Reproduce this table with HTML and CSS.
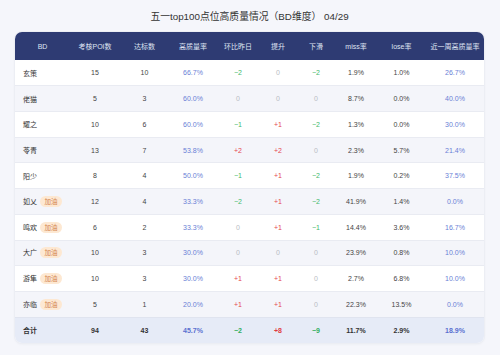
FILE: index.html
```html
<!DOCTYPE html>
<html lang="zh">
<head>
<meta charset="utf-8">
<link rel="stylesheet" href="styles.css">
</head>
<body>
<div class="page">
  <h1 class="title">五一top100点位高质量情况（BD维度） 04/29</h1>
  <div class="card">
    <table class="grid">
      <colgroup>
        <col style="width:55px"><col style="width:50px"><col style="width:49px"><col style="width:48px"><col style="width:42px"><col style="width:38px"><col style="width:38px"><col style="width:42px"><col style="width:49px"><col style="width:58px">
      </colgroup>
      <thead>
        <tr><th>BD</th><th>考核POI数</th><th>达标数</th><th>高质量率</th><th>环比昨日</th><th>提升</th><th>下滑</th><th>miss率</th><th>lose率</th><th>近一周高质量率</th></tr>
      </thead>
      <tbody>
        <tr><td class="name">玄策</td><td>15</td><td>10</td><td class="blue">66.7%</td><td class="green">−2</td><td class="zero">0</td><td class="green">−2</td><td>1.9%</td><td>1.0%</td><td class="blue">26.7%</td></tr>
        <tr><td class="name">佬猫</td><td>5</td><td>3</td><td class="blue">60.0%</td><td class="zero">0</td><td class="zero">0</td><td class="zero">0</td><td>8.7%</td><td>0.0%</td><td class="blue">40.0%</td></tr>
        <tr><td class="name">耀之</td><td>10</td><td>6</td><td class="blue">60.0%</td><td class="green">−1</td><td class="red">+1</td><td class="green">−2</td><td>1.3%</td><td>0.0%</td><td class="blue">30.0%</td></tr>
        <tr><td class="name">苓青</td><td>13</td><td>7</td><td class="blue">53.8%</td><td class="red">+2</td><td class="red">+2</td><td class="zero">0</td><td>2.3%</td><td>5.7%</td><td class="blue">21.4%</td></tr>
        <tr><td class="name">阳少</td><td>8</td><td>4</td><td class="blue">50.0%</td><td class="green">−1</td><td class="red">+1</td><td class="green">−2</td><td>1.9%</td><td>0.2%</td><td class="blue">37.5%</td></tr>
        <tr><td class="name">如乂<span class="tag">加油</span></td><td>12</td><td>4</td><td class="blue">33.3%</td><td class="green">−2</td><td class="red">+1</td><td class="green">−2</td><td>41.9%</td><td>1.4%</td><td class="blue">0.0%</td></tr>
        <tr><td class="name">鸣欢<span class="tag">加油</span></td><td>6</td><td>2</td><td class="blue">33.3%</td><td class="zero">0</td><td class="red">+1</td><td class="green">−1</td><td>14.4%</td><td>3.6%</td><td class="blue">16.7%</td></tr>
        <tr><td class="name">大广<span class="tag">加油</span></td><td>10</td><td>3</td><td class="blue">30.0%</td><td class="zero">0</td><td class="zero">0</td><td class="zero">0</td><td>23.9%</td><td>0.8%</td><td class="blue">10.0%</td></tr>
        <tr><td class="name">游隼<span class="tag">加油</span></td><td>10</td><td>3</td><td class="blue">30.0%</td><td class="red">+1</td><td class="red">+1</td><td class="zero">0</td><td>2.7%</td><td>6.8%</td><td class="blue">10.0%</td></tr>
        <tr><td class="name">亦临<span class="tag">加油</span></td><td>5</td><td>1</td><td class="blue">20.0%</td><td class="red">+1</td><td class="red">+1</td><td class="zero">0</td><td>22.3%</td><td>13.5%</td><td class="blue">0.0%</td></tr>
      </tbody>
      <tfoot>
        <tr><td class="name">合计</td><td>94</td><td>43</td><td class="blue">45.7%</td><td class="green">−2</td><td class="red">+8</td><td class="green">−9</td><td>11.7%</td><td>2.9%</td><td class="blue">18.9%</td></tr>
      </tfoot>
    </table>
  </div>
</div>
</body>
</html>
```
FILE: styles.css
```css
html, body {
  margin: 0;
  padding: 0;
  background: #f5f6fb;
}
body {
  font-family: "Liberation Sans", "Noto Sans CJK SC", sans-serif;
  color: #333;
}
.page {
  width: 500px;
  height: 355px;
  padding: 10px 16px 0 15px;
  box-sizing: border-box;
}
.title {
  margin: 0 0 9px;
  height: 13px;
  line-height: 13px;
  font-size: 9.8px;
  font-weight: 400;
  text-align: center;
  color: #333;
}
.card {
  width: 469px;
  border-radius: 7px;
  overflow: hidden;
  background: #fff;
  box-shadow: 0 0 0 1px #eceef4, 0 1px 3px rgba(40, 50, 90, 0.06);
}
.grid {
  width: 469px;
  border-collapse: collapse;
  table-layout: fixed;
  font-size: 7px;
}
.grid th {
  height: 28px;
  padding: 0;
  background: #2e3b73;
  color: #dfe3f2;
  font-weight: 400;
  text-align: center;
  white-space: nowrap;
}
.grid td {
  height: 25.73px;
  padding: 0;
  text-align: center;
  color: #444;
  white-space: nowrap;
  border-top: 1px solid #e9ebf2;
  box-sizing: border-box;
}
.grid tbody tr:first-child td {
  border-top: 0;
}
.grid tbody tr:nth-child(even) td {
  background: #f4f5fa;
}
.grid td.name {
  text-align: left;
  padding-left: 8px;
  color: #333;
}
.grid .blue { color: #6a7fd6; }
.grid .green { color: #3fb96b; }
.grid .red { color: #e5484d; }
.grid .zero { color: #b9bcc4; }
.tag {
  display: inline-block;
  margin-left: 3px;
  width: 22px;
  height: 11px;
  line-height: 11px;
  text-align: center;
  border-radius: 6px;
  background: #fde8d2;
  color: #d2834d;
  font-size: 6.5px;
  vertical-align: 0;
}
.grid tfoot td {
  background: #e6ebf7;
  font-weight: 700;
  color: #333;
  border-top: 1px solid #e0e4ef;
}
.grid tfoot td.blue { color: #5a70d0; }
.grid tfoot td.green { color: #2fae5f; }
.grid tfoot td.red { color: #e03b42; }
```
